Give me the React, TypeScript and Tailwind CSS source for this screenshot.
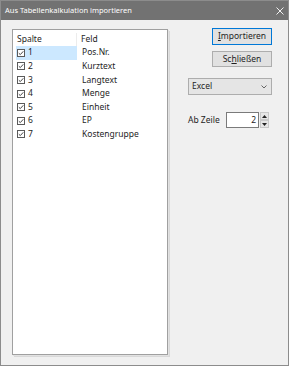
import React from 'react'

const rows = [
  { nr: '1', feld: 'Pos.Nr.' },
  { nr: '2', feld: 'Kurztext' },
  { nr: '3', feld: 'Langtext' },
  { nr: '4', feld: 'Menge' },
  { nr: '5', feld: 'Einheit' },
  { nr: '6', feld: 'EP' },
  { nr: '7', feld: 'Kostengruppe' },
]

function CheckIcon() {
  return (
    <svg width="8" height="8" viewBox="0 0 8 8" className="shrink-0">
      <rect x="0.5" y="0.5" width="7" height="7" fill="white" stroke="#5a5a5a" strokeWidth="1" />
      <path d="M1.8 4.2 L3.3 5.6 L6.3 2.3" fill="none" stroke="#333" strokeWidth="0.9" />
    </svg>
  )
}

export default function App() {
  return (
    <div
      className="w-[289px] h-[366px] flex flex-col border border-[#8c8c8c] bg-[#f0f0f0] text-[8.5px] text-[#1e1e1e]"
      style={{ fontFamily: '"Noto Sans", "Open Sans", sans-serif' }}
    >
      {/* title bar */}
      <div className="h-[19px] shrink-0 bg-[#727272] flex items-center justify-between pl-[4px] pr-[4px] text-white">
        <span className="text-[7.5px] leading-none">Aus Tabellenkalkulation importieren</span>
        <svg width="8" height="8" viewBox="0 0 8 8">
          <path d="M0.5 0.5 L7.5 7.5 M7.5 0.5 L0.5 7.5" stroke="white" strokeWidth="0.9" />
        </svg>
      </div>

      <div className="flex flex-1 pt-[9px] pb-[10px] pl-[11px]">
        {/* list */}
        <div className="relative w-[156px] h-full border border-[#a0a0a0] bg-white pl-[3px] pt-[3px] shadow-[1px_1px_0_#e2e2e2,2px_2px_0_#d8d8d8]">
          <div className="flex h-[13px] items-center">
            <div className="w-[61px] pl-[1px] border-r border-[#ececec] h-full flex items-center">Spalte</div>
            <div className="pl-[4px]">Feld</div>
          </div>
          {rows.map((r, i) => (
            <div key={r.nr} className="flex h-[13.6px] items-center">
              <div
                className={`w-[61px] h-full flex items-center gap-[3px] pl-[1px] ${i === 0 ? 'bg-[#cce8ff]' : ''}`}
              >
                <CheckIcon />
                <span>{r.nr}</span>
              </div>
              <div className="pl-[5px]">{r.feld}</div>
            </div>
          ))}
        </div>

        {/* right side */}
        <div className="flex-1 flex flex-col items-end pr-[16px]">
          <button className="w-[60px] h-[17px] -mt-px border border-[#0078d7] bg-[#e1e1e1] flex items-center justify-center leading-none">
            <span><span className="underline">I</span>mportieren</span>
          </button>
          <button className="w-[60px] h-[16px] mt-[6px] border border-[#adadad] bg-[#e1e1e1] flex items-center justify-center leading-none">
            <span>Sc<span className="underline">h</span>ließen</span>
          </button>
          <div className="w-[84px] h-[17px] mt-[11px] border border-[#adadad] bg-[#e5e5e5] flex items-center justify-between pl-[3px] pr-[4px]">
            <span>Excel</span>
            <svg width="6" height="4" viewBox="0 0 6 4">
              <path d="M0.5 0.5 L3 3 L5.5 0.5" fill="none" stroke="#555" strokeWidth="0.9" />
            </svg>
          </div>
          <div className="w-[84px] mt-[17px] flex items-center">
            <span className="w-[38px]">Ab Zeile</span>
            <div className="w-[33px] h-[16px] border border-[#7a7a7a] bg-white flex items-center justify-end pr-[2px]">2</div>
            <div className="w-[9px] h-[16px] flex flex-col ml-[1px]">
              <div className="h-[8px] bg-[#e6e6e6] border border-[#c8c8c8] flex items-center justify-center">
                <svg width="5" height="3" viewBox="0 0 5 3"><path d="M0 3 L2.5 0 L5 3 Z" fill="#222" /></svg>
              </div>
              <div className="h-[8px] bg-[#e6e6e6] border border-[#c8c8c8] flex items-center justify-center">
                <svg width="5" height="3" viewBox="0 0 5 3"><path d="M0 0 L2.5 3 L5 0 Z" fill="#222" /></svg>
              </div>
            </div>
          </div>
        </div>
      </div>
    </div>
  )
}
